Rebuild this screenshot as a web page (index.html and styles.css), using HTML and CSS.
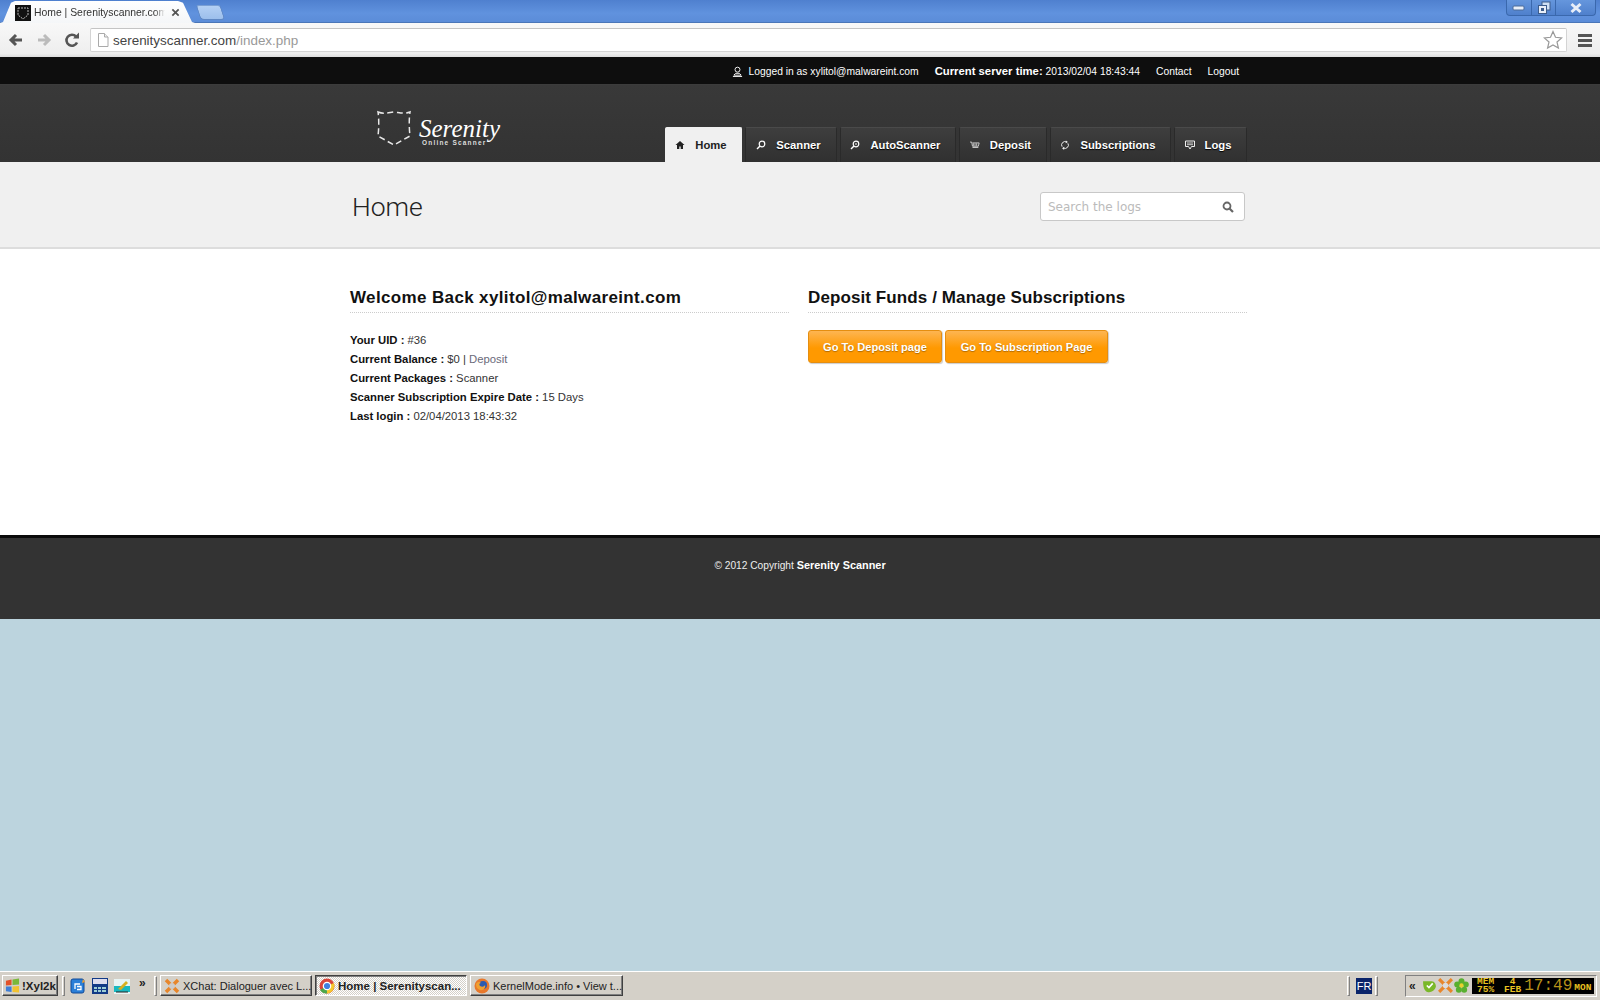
FILE: index.html
```html
<!DOCTYPE html>
<html lang="en">
<head>
<meta charset="utf-8">
<title>Home | Serenityscanner.com</title>
<link rel="stylesheet" href="styles.css">
</head>
<body>
<div class="screen">
  <div class="titlebar">
    <div class="tab">
      <svg class="favicon" viewBox="0 0 16 16"><rect width="16" height="16" fill="#111"/><path d="M3 3h10v7l-5 4-5-4z" fill="none" stroke="#bbb" stroke-width="1" stroke-dasharray="2 1"/></svg>
      <span class="tab-title">Home | Serenityscanner.com</span>
      <svg class="tab-close" viewBox="0 0 10 10"><path d="M1.5 1.5l7 7M8.5 1.5l-7 7" stroke="#555" stroke-width="2"/></svg>
    </div>
    <div class="newtab"></div>
    <div class="winctl">
      <div class="winbtn min"><svg viewBox="0 0 14 8" width="14" height="8"><rect x="1" y="2" width="11" height="4" rx="1" fill="#e8eef8" stroke="#4a6a98"/></svg></div>
      <div class="winbtn max"><svg viewBox="0 0 14 14" width="14" height="14"><rect x="5" y="1" width="8" height="8" fill="#cfe0f5" stroke="#3c5c8c"/><rect x="1.5" y="4.5" width="8" height="8" fill="#e8eef8" stroke="#3c5c8c"/><rect x="4" y="7" width="3" height="3" fill="#3c5c8c"/></svg></div>
      <div class="winbtn close"><svg viewBox="0 0 14 12" width="14" height="12"><path d="M2.5 2l9 8M11.5 2l-9 8" stroke="#e8eef8" stroke-width="3"/></svg></div>
    </div>
  </div>
  <div class="toolbar">
    <svg class="tool-icon" viewBox="0 0 16 16"><path d="M14 8H4M8 3L3 8l5 5" fill="none" stroke="#555" stroke-width="3"/></svg>
    <svg class="tool-icon fwd" viewBox="0 0 16 16"><path d="M2 8h10M8 3l5 5-5 5" fill="none" stroke="#bbb" stroke-width="3"/></svg>
    <svg class="tool-icon reload" viewBox="0 0 16 16"><path d="M13 10.5A5.5 5.5 0 1 1 12 4.5" fill="none" stroke="#555" stroke-width="2.6"/><path d="M9 6.5h6v-6z" fill="#555"/></svg>
    <div class="omnibox">
      <svg class="page-icon" viewBox="0 0 12 14"><path d="M1.5.5h6l3.500 3.500v9.500h-9.500z" fill="#fff" stroke="#aaa"/><path d="M7.500.5v3.500h3.500" fill="#eee" stroke="#aaa"/></svg>
      <span class="url">serenityscanner.com<span class="url-path">/index.php</span></span>
      <svg class="star" viewBox="0 0 20 20"><path d="M10 1.500l2.500 5.800 6.200.6-4.700 4.100 1.400 6.100L10 15l-5.400 3.100L6 12 1.300 7.900l6.200-.6z" fill="#fff" stroke="#999" stroke-width="1.200"/></svg>
    </div>
    <div class="menu-icon"><i></i><i></i><i></i></div>
  </div>

  <div class="topbar">
    <div class="wrap topbar-in">
      <svg class="user-icon" viewBox="0 0 12 12"><circle cx="6" cy="4" r="2.700" fill="none" stroke="#fff"/><path d="M2 10l2-2h4l2 2zM1 11.500h10" fill="none" stroke="#fff"/></svg>
      <span class="login">Logged in as xylitol@malwareint.com</span>
      <span class="server"><b>Current server time:</b> 2013/02/04 18:43:44</span>
      <span class="toplink">Contact</span>
      <span class="toplink">Logout</span>
    </div>
  </div>

  <header class="header">
    <div class="wrap header-in">
      <div class="logo">
        <svg class="shield" viewBox="0 0 36 38"><path d="M2 3c5 2 8 1 16 0c8 1 11 2 16 0c-1 6-1 16 0 24l-16 9L2 27c1-8 1-18 0-24z" fill="none" stroke="#e8e8e8" stroke-width="1.500" stroke-dasharray="6 3.500"/></svg>
        <div class="logo-text">
          <span class="logo-name">Serenity</span>
          <span class="logo-sub">Online Scanner</span>
        </div>
      </div>
      <nav class="nav">
        <a class="navtab active w-home"><svg class="nav-icon" viewBox="0 0 10 10"><path d="M5 1L.5 5H2v4h2.300V6.500h1.400V9H8V5h1.500z" fill="#222"/></svg>Home</a>
        <a class="navtab w-scan"><svg class="nav-icon" viewBox="0 0 10 10"><circle cx="6" cy="4" r="2.800" fill="none" stroke="#fff" stroke-width="1.200"/><path d="M4 6L1 9" stroke="#fff" stroke-width="1.500"/></svg>Scanner</a>
        <a class="navtab w-auto"><svg class="nav-icon" viewBox="0 0 10 10"><circle cx="6" cy="4" r="2.800" fill="none" stroke="#fff" stroke-width="1.200"/><path d="M4 6L1 9" stroke="#fff" stroke-width="1.500"/><path d="M5 4h2" stroke="#fff"/></svg>AutoScanner</a>
        <a class="navtab w-dep"><svg class="nav-icon" viewBox="0 0 12 10"><path d="M0 1.500h2l1 5h7l1-4H3" fill="none" stroke="#ddd"/><path d="M4 3v3M6 3v3M8 3v3M3 8h7" stroke="#ddd"/></svg>Deposit</a>
        <a class="navtab w-sub"><svg class="nav-icon" viewBox="0 0 10 12"><path d="M1.500 8A4 4 0 0 1 7 2.500M8.500 4A4 4 0 0 1 3 9.500" fill="none" stroke="#eee" stroke-width="1.200"/><path d="M6 .5l2.500 2L6 4zM4 8l-2.500 2L4 12z" fill="#eee"/></svg>Subscriptions</a>
        <a class="navtab w-logs"><svg class="nav-icon" viewBox="0 0 10 10"><path d="M.5 1h9v5.500H6.500L5 9 3.500 6.500H.5z" fill="none" stroke="#eee"/><path d="M2 3h6M2 4.700h6" stroke="#eee" stroke-width=".8"/></svg>Logs</a>
      </nav>
    </div>
  </header>

  <section class="titlestrip">
    <div class="wrap titlestrip-in">
      <h1>Home</h1>
      <div class="search">
        <span class="search-ph">Search the logs</span>
        <svg class="search-icon" viewBox="0 0 12 12"><circle cx="5" cy="5" r="3.500" fill="none" stroke="#666" stroke-width="1.800"/><path d="M7.500 7.500l3.500 3.500" stroke="#666" stroke-width="2.200"/></svg>
      </div>
    </div>
  </section>

  <main class="content">
    <div class="wrap columns">
      <div class="col">
        <h2 class="h-left">Welcome Back xylitol@malwareint.com</h2>
        <ul class="facts">
          <li><b>Your UID :</b> #36</li>
          <li><b>Current Balance :</b> $0 | <a class="deposit">Deposit</a></li>
          <li><b>Current Packages :</b> Scanner</li>
          <li><b>Scanner Subscription Expire Date :</b> 15 Days</li>
          <li><b>Last login :</b> 02/04/2013 18:43:32</li>
        </ul>
      </div>
      <div class="col">
        <h2 class="h-right">Deposit Funds / Manage Subscriptions</h2>
        <div class="buttons">
          <a class="btn btn-a">Go To Deposit page</a>
          <a class="btn btn-b">Go To Subscription Page</a>
        </div>
      </div>
    </div>
  </main>

  <footer class="footer">
    <p>© 2012 Copyright <b>Serenity Scanner</b></p>
  </footer>

  <div class="desktop"></div>

  <div class="taskbar">
    <div class="start">
      <svg class="flag" viewBox="0 0 16 16"><path d="M1 3l6-1.500v6L1 8z" fill="#e2522a"/><path d="M8 1.500l7-1v6.500l-7 .5z" fill="#7ab83a"/><path d="M1 9l6 0v6l-6-1z" fill="#3f7fd8"/><path d="M8 9l7-.5v7L8 15z" fill="#f2c230"/></svg>
      <b>!Xyl2k</b>
    </div>
    <span class="tb-sep s1"></span>
    <svg class="ql" viewBox="0 0 16 16"><rect x="1" y="1" width="13" height="14" rx="2" fill="#2a7fd8" stroke="#114a98"/><path d="M5 11V6h5M7 8.500h4v3H7" fill="none" stroke="#fff" stroke-width="1.300"/><path d="M13 1l2 3-3 1z" fill="#f0a030"/></svg>
    <svg class="ql" viewBox="0 0 16 16"><rect width="16" height="16" fill="#123a86"/><rect x="1" y="1" width="14" height="5" fill="#dde"/><path d="M2 10h3M6 10h3M10 10h4M2 13h3M6 13h3M10 13h4" stroke="#cfe" stroke-width="1.500"/></svg>
    <svg class="ql" viewBox="0 0 16 16"><rect y="1" width="16" height="15" fill="#e8f4f4"/><rect y="8" width="16" height="6" fill="#18b8c0"/><path d="M4 11l8-8 2 2-7 7z" fill="#d8b020"/><path d="M2 14h12" stroke="#222"/></svg>
    <span class="chev">»</span>
    <span class="tb-sep s2"></span>
    <div class="task t1">
      <svg class="task-icon" viewBox="0 0 16 16"><path d="M2 2l12 12M14 2L2 14" stroke="#e8862a" stroke-width="3.500"/><circle cx="8" cy="8" r="3" fill="#ccc"/></svg>
      <span>XChat: Dialoguer avec L...</span>
    </div>
    <div class="task t2 current">
      <svg class="task-icon" viewBox="0 0 16 16"><circle cx="8" cy="8" r="7.500" fill="#d8453a"/><path d="M8 8L1 12a8 8 0 0 0 7 3.500z" fill="#4ca84a"/><path d="M8 8l7-3a8 8 0 0 1-7 10.500z" fill="#f6c82e"/><circle cx="8" cy="8" r="3.700" fill="#3f80e0" stroke="#fff" stroke-width="1.200"/></svg>
      <span>Home | Serenityscan...</span>
    </div>
    <div class="task t3">
      <svg class="task-icon" viewBox="0 0 16 16"><circle cx="8" cy="8" r="7.500" fill="#e8782a"/><circle cx="9" cy="7" r="4" fill="#2a5ab0"/><path d="M2 6c2-3 4-2 5-1-2 0-2 2-1 3 2 1 4 1 5-1 1 3-2 6-5 5C3 11 2 9 2 6z" fill="#f0a030"/></svg>
      <span>KernelMode.info • View t...</span>
    </div>
    <span class="tb-sep s3"></span>
    <span class="lang">FR</span>
    <span class="tb-sep s4"></span>
    <div class="tray">
      <span class="tray-chev">«</span>
      <svg class="tray-icon" viewBox="0 0 14 14"><path d="M1 3h8c3 0 4 3 4 5-1 4-5 6-8 5C2 12 1 8 1 3z" fill="#7ab828"/><path d="M4.500 7l2 2 3.500-4" fill="none" stroke="#fff" stroke-width="1.500"/></svg>
      <svg class="tray-icon" viewBox="0 0 14 14"><path d="M1 1l12 12M13 1L1 13" stroke="#e8862a" stroke-width="3"/><circle cx="7" cy="7" r="2.500" fill="#ddd"/></svg>
      <svg class="tray-icon" viewBox="0 0 14 14"><circle cx="7" cy="3" r="2.800" fill="#58b030"/><circle cx="3" cy="6" r="2.800" fill="#58b030"/><circle cx="11" cy="6" r="2.800" fill="#58b030"/><circle cx="4.500" cy="11" r="2.800" fill="#58b030"/><circle cx="9.500" cy="11" r="2.800" fill="#58b030"/><circle cx="7" cy="7" r="2" fill="#e8d030"/></svg>
      <div class="clock">
        <span class="stack"><span>MEM</span><span>75%</span></span>
        <span class="stack date"><span>4</span><span>FEB</span></span>
        <span class="time">17:49</span>
        <span class="day">MON</span>
      </div>
    </div>
  </div>
</div>
</body>
</html>
```
FILE: styles.css
```css
* { box-sizing: border-box; }
html, body { margin: 0; padding: 0; }
body { font-family: "Liberation Sans", Arial, sans-serif; font-size: 12px; color: #222; background: #bcd4de; }
svg { display: block; flex: none; }
a { text-decoration: none; }
ul { list-style: none; margin: 0; padding: 0; }
h1, h2, p { margin: 0; font-weight: normal; }

.screen { width: 1600px; height: 1000px; display: flex; flex-direction: column; overflow: hidden; }
.wrap { width: 900px; margin: 0 auto; }

/* browser chrome */
.titlebar { height: 23px; flex: none; display: flex; align-items: flex-end; background: linear-gradient(#4f80cf, #6092de 60%, #5b8cd8); border-bottom: 1px solid #4a76b8; }
.tab { width: 195px; height: 22px; margin-bottom: -1px; display: flex; align-items: center; padding: 1px 0 0 15px; background: linear-gradient(#fff, #f4f6f8); clip-path: polygon(0 100%, 3px 95%, 11px 8%, 15px 0, 178px 0, 183px 8%, 192px 95%, 195px 100%); }
.favicon { width: 16px; height: 16px; }
.tab-title { width: 131px; margin-left: 3px; white-space: nowrap; font-size: 10.400px; color: #333; -webkit-mask-image: linear-gradient(90deg, #000 92%, transparent); mask-image: linear-gradient(90deg, #000 92%, transparent); }
.tab-close { width: 9px; height: 9px; margin-left: 6px; }
.newtab { width: 25px; height: 15px; margin: 0 0 2px 3px; background: linear-gradient(#b4d0f4, #9cbfec); border: 1px solid #5f88c4; border-top-color: #7a9fd4; border-radius: 3px 3px 4px 4px; transform: skewX(18deg); }
.winctl { margin-left: auto; align-self: flex-start; display: flex; height: 16px; margin-right: 4px; background: linear-gradient(#6596dd, #4f80cc); border: 1px solid #3a68ad; border-top: 0; border-radius: 0 0 4px 4px; }
.winbtn { display: flex; align-items: center; justify-content: center; border-left: 1px solid #3a68ad; }
.winbtn.min { width: 24px; border-left: 0; }
.winbtn.max { width: 24px; }
.winbtn.close { width: 40px; }

.toolbar { height: 34px; flex: none; display: flex; align-items: center; padding-left: 8px; background: linear-gradient(#f8f8f8, #eee 90%, #ddd); }
.tool-icon { width: 16px; height: 16px; }
.tool-icon.fwd { margin-left: 12px; }
.tool-icon.reload { margin-left: 12px; }
.omnibox { width: 1477px; height: 24px; margin-left: 10px; display: flex; align-items: center; padding: 0 3px 0 6px; background: #fff; border: 1px solid #d4d4d4; border-top-color: #c4c4c4; border-radius: 2px; }
.page-icon { width: 12px; height: 14px; }
.url { margin-left: 4px; font-size: 13.450px; color: #444; }
.url-path { color: #999; }
.star { width: 20px; height: 20px; margin-left: auto; }
.menu-icon { margin-left: 11px; width: 14px; display: flex; flex-direction: column; gap: 2px; }
.menu-icon i { display: block; height: 3px; background: #555; }

/* site header */
.topbar { height: 28px; flex: none; background: #0e0e0e; border-bottom: 1px solid #3c3c3c; color: #fff; font-size: 10.300px; }
.topbar-in { height: 27px; display: flex; align-items: center; justify-content: flex-end; padding: 1px 11px 0 0; }
.user-icon { width: 11px; height: 11px; margin-right: 6px; }
.server { margin-left: 16px; }
.server b { font-size: 11.300px; }
.toplink { margin-left: 16px; }

.header { height: 77px; flex: none; background: #333 linear-gradient(#393939, #333); }
.header-in { height: 77px; display: flex; justify-content: space-between; align-items: flex-end; padding-right: 3px; }
.logo { align-self: flex-start; display: flex; align-items: flex-start; margin: 24px 0 0 26px; }
.shield { width: 36px; height: 38px; }
.logo-text { display: flex; flex-direction: column; margin-left: 7px; color: #fff; }
.logo-name { font-family: "Liberation Serif", serif; font-style: italic; font-size: 25px; line-height: 18px; margin-top: 11px; }
.logo-sub { font-size: 6.500px; font-weight: bold; line-height: 7px; letter-spacing: 1.200px; margin: 1px 0 0 3px; color: #ddd; }

.nav { display: flex; gap: 3px; height: 35px; }
.navtab { display: flex; align-items: center; justify-content: center; padding-right: 5px; font-size: 11.250px; font-weight: bold; color: #fff; text-shadow: 0 1px 1px #000; background: linear-gradient(#3e3e3e, #303030); border: 1px solid #2a2a2a; border-top-color: #4a4a4a; border-bottom: 0; border-radius: 2px 2px 0 0; }
.navtab.active { color: #222; text-shadow: none; background: #f0f0f0; border-color: #f0f0f0; }
.nav-icon { width: 10px; height: 10px; margin-right: 10px; }
.w-home { width: 77px; }
.w-scan { width: 92px; }
.w-auto { width: 116px; }
.w-dep { width: 88px; }
.w-sub { width: 121px; }
.w-logs { width: 73px; }

.titlestrip { height: 87px; flex: none; background: #f0f0f0; border-bottom: 2px solid #ddd; }
.titlestrip-in { display: flex; justify-content: space-between; align-items: flex-start; padding: 0 5px 0 2px; }
h1 { font-family: Roboto, sans-serif; font-weight: 300; font-size: 26.500px; line-height: 32px; color: #222; margin-top: 29px; }
.search { width: 205px; height: 29px; margin-top: 30px; display: flex; align-items: center; justify-content: space-between; padding: 1px 10px 0 7px; background: #fff; border: 1px solid #c8c8c8; border-radius: 3px; }
.search-ph { font-family: "DejaVu Sans", sans-serif; font-size: 12px; color: #bbb; }
.search-icon { width: 12px; height: 12px; }

.content { height: 286px; flex: none; background: #fff; padding-top: 38px; }
.columns { display: grid; grid-template-columns: 439px 439px; column-gap: 19px; }
h2 { font-size: 17px; font-weight: bold; line-height: 22px; padding-bottom: 3px; color: #111; border-bottom: 1px dotted #ccc; }
.h-left { letter-spacing: .36px; }
.h-right { letter-spacing: .1px; }
.facts { margin-top: 18px; color: #333; }
.facts li { line-height: 19px; font-size: 11.300px; white-space: nowrap; }
.facts b { color: #111; }
.deposit { color: #6a6a7a; }
.buttons { margin-top: 17px; display: flex; gap: 3px; }
.btn { height: 33px; display: flex; align-items: center; justify-content: center; font-size: 11.100px; font-weight: bold; color: #fff; text-shadow: 0 1px 1px #b06a00; background: linear-gradient(#fdb552, #ff9900 55%, #ff9900); border: 1px solid #e58e10; border-radius: 3px; box-shadow: 1px 1px 1px #ccc; }
.btn-a { width: 134px; }
.btn-b { width: 163px; }

.footer { height: 84px; flex: none; background: #333; border-top: 3px solid #0a0a0a; color: #eee; text-align: center; font-size: 10.200px; padding-top: 20px; }
.footer p { line-height: 14px; }
.footer b { color: #fff; font-size: 10.900px; }

.desktop { flex: 1; background: #bcd4de; }

/* windows taskbar */
.taskbar { height: 29px; flex: none; display: flex; align-items: center; padding: 0 3px 1px 2px; background: #d4d0c8; border-top: 1px solid #fff; font-family: "Liberation Sans", sans-serif; font-size: 11px; color: #222; }
.start { width: 56px; height: 21px; display: flex; align-items: center; gap: 2px; padding-left: 2px; background: #d4d0c8; border: 1px solid; border-color: #fff #404040 #404040 #fff; box-shadow: inset -1px -1px #808080; }
.flag { width: 15px; height: 15px; }
.start b { font-size: 11.500px; }
.tb-sep { width: 3px; height: 20px; flex: none; border: 1px solid; border-color: #fff #808080 #808080 #fff; }
.s1 { margin-left: 4px; }
.ql { width: 16px; height: 16px; margin-left: 5px; }
.ql + .ql { margin-left: 6px; }
.chev { width: 12px; margin: -6px 0 0 9px; font-size: 12px; font-weight: bold; }
.s2 { margin-left: 3px; }
.task { height: 21px; display: flex; align-items: center; padding-left: 3px; gap: 3px; white-space: nowrap; overflow: hidden; background: #d4d0c8; border: 1px solid; border-color: #fff #404040 #404040 #fff; box-shadow: inset -1px -1px #808080; }
.task-icon { width: 16px; height: 16px; }
.t1 { width: 152px; margin-left: 3px; }
.t2 { width: 152px; margin-left: 3px; }
.t3 { width: 153px; margin-left: 3px; }
.task.current { font-weight: bold; font-size: 11.500px; background: repeating-conic-gradient(#fff 0 25%, #d4d0c8 0 50%) 0 0 / 2px 2px; border-color: #404040 #fff #fff #404040; box-shadow: inset 1px 1px #808080; }
.s3 { margin-left: 724px; }
.lang { width: 16px; height: 16px; margin-left: 6px; background: #0a246a; color: #fff; font-size: 11px; line-height: 16px; text-align: center; }
.s4 { margin-left: 3px; }
.tray { width: 192px; height: 22px; margin-left: auto; display: flex; align-items: center; padding-left: 3px; border: 1px solid; border-color: #808080 #fff #fff #808080; }
.tray-chev { width: 13px; font-weight: bold; font-size: 12px; line-height: 14px; }
.tray-icon { width: 15px; height: 15px; margin-right: 1px; }
.clock { width: 122px; height: 16px; margin-left: 2px; display: flex; align-items: center; padding-left: 5px; background: #000; color: #e8c020; font-family: "Liberation Mono", monospace; font-weight: bold; }
.stack { display: flex; flex-direction: column; align-items: center; font-size: 9.500px; line-height: 8px; }
.date { margin-left: 10px; }
.time { margin-left: 3px; font-size: 16px; line-height: 16px; font-weight: normal; color: #b8941a; }
.day { margin-left: 2px; margin-top: 4px; font-size: 9.500px; line-height: 10px; }
```
